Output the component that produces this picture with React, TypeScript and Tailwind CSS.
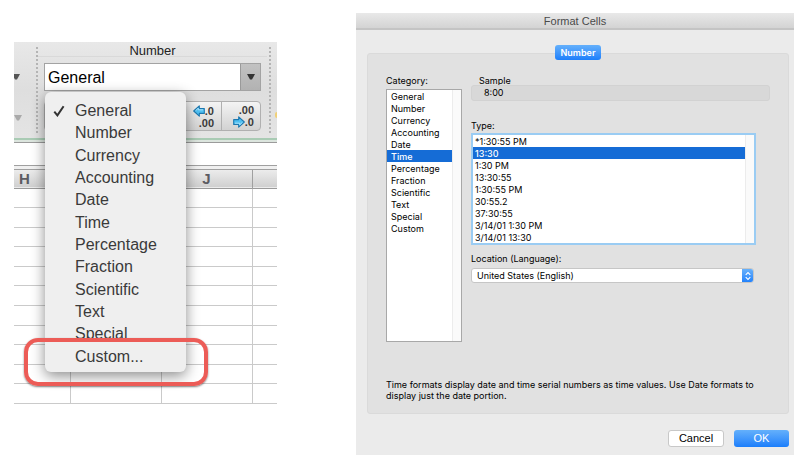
import { useState } from "react";

const menuItems = [
  "General", "Number", "Currency", "Accounting", "Date", "Time",
  "Percentage", "Fraction", "Scientific", "Text", "Special", "Custom...",
];

const categories = [
  "General", "Number", "Currency", "Accounting", "Date", "Time",
  "Percentage", "Fraction", "Scientific", "Text", "Special", "Custom",
];

const timeFormats = [
  "*1:30:55 PM", "13:30", "1:30 PM", "13:30:55", "1:30:55 PM",
  "30:55.2", "37:30:55", "3/14/01 1:30 PM", "3/14/01 13:30",
];

const gridRows = Array.from({ length: 11 }, (_, i) => i);

function Triangle({ className }: { className: string }) {
  return (
    <svg viewBox="0 0 8 6" className={className} aria-hidden="true">
      <path d="M0 0H8L5 5.5H3Z" fill="currentColor" />
    </svg>
  );
}

function BlueArrow({ flip }: { flip?: boolean }) {
  return (
    <svg viewBox="0 0 12 12" className={flip ? "h-3 w-3 rotate-180" : "h-3 w-3"} aria-hidden="true">
      <path
        d="M0.7 6L6.3 0.8V3.6H11.3V8.4H6.3V11.2Z"
        fill="#4fc0f2"
        stroke="#1c78b0"
        strokeWidth="1.1"
        strokeLinejoin="round"
      />
      <path d="M2.6 5.7L5.3 3.1V4.8H10.2" fill="none" stroke="#b5eaff" strokeWidth="0.9" />
    </svg>
  );
}

function DottedLine() {
  return <div className="my-[5px] w-0 border-l-2 border-dotted border-[#b4b4b4]" />;
}

function FormatMenu({ value, onPick }: { value: string; onPick: (v: string) => void }) {
  return (
    <div
      role="menu"
      aria-label="Number format"
      className="absolute top-full left-0 z-10 mt-0.5 flex h-[280px] w-[141px] flex-col rounded-md bg-[#efefef] pt-2 pb-1 shadow-[0_4px_14px_rgba(0,0,0,0.45)]"
    >
      {menuItems.map((item) => (
        <button
          key={item}
          type="button"
          role="menuitemradio"
          aria-checked={item === value}
          onClick={() => onPick(item)}
          className="flex flex-1 items-center pl-2 text-left text-base leading-none text-[#3a3a3a]"
        >
          <span className="w-[22px]">
            {item === value && (
              <svg viewBox="0 0 12 12" className="h-3 w-3" aria-hidden="true">
                <path d="M1.3 6.6L4.4 10.4L10.6 1.2" fill="none" stroke="#333" strokeWidth="2" />
              </svg>
            )}
          </span>
          {item}
        </button>
      ))}
    </div>
  );
}

function Spreadsheet() {
  const [format, setFormat] = useState("General");
  return (
    <section className="relative mt-[42px] overflow-hidden bg-white">
      <div className="flex h-24 bg-linear-to-b from-[#e8e8e8] via-[#dedede] to-[#e4e4e4]">
        <div className="flex w-[22px] flex-col gap-[35px] pt-8">
          <Triangle className="-ml-0.5 h-1.5 w-2 text-[#555]" />
          <Triangle className="h-1.5 w-2 text-[#aaa]" />
        </div>
        <DottedLine />
        <div className="flex flex-1 flex-col pr-2 pl-1.5">
          <div className="-mx-1.5 h-[15px] border-b border-[#d9d9d9] text-center text-[13px] leading-[17px] text-[#222]">
            Number
          </div>
          <div className="relative mt-1.5 flex h-7 border border-[#a3a3a3] bg-white">
            <input
              aria-label="Number format"
              value={format}
              onChange={(e) => setFormat(e.target.value)}
              className="w-0 flex-1 bg-transparent pt-px pl-[3px] text-base text-black outline-none"
            />
            <button
              type="button"
              aria-label="Show formats"
              className="flex w-5 items-center justify-center border-l border-[#9a9a9a] bg-linear-to-b from-[#c2c2c2] to-[#b2b2b2] text-[#333]"
            >
              <Triangle className="h-1.5 w-2" />
            </button>
            <FormatMenu value={format} onPick={setFormat} />
          </div>
          <div className="mt-2.5 flex h-[30px] justify-end rounded-sm border border-[#b0b0b0] bg-linear-to-b from-[#f4f4f4] to-[#d2d2d2] text-[11px] leading-3 font-bold text-[#3a3a3a]">
            <button type="button" aria-label="Increase decimal" className="flex w-[39px] flex-col items-end justify-end pr-[7px] pb-px">
              <span className="flex items-center"><BlueArrow />.0</span>
              <span>.00</span>
            </button>
            <button type="button" aria-label="Decrease decimal" className="flex w-[39px] flex-col items-end justify-start border-l border-[#b0b0b0] pt-0.5 pr-1.5">
              <span>.00</span>
              <span className="flex items-center"><BlueArrow flip />.0</span>
            </button>
          </div>
        </div>
        <DottedLine />
        <div className="flex w-[6px] items-end justify-end pb-5">
          <div className="h-1.5 w-0.5 rounded-l-sm bg-[#f0d078]" />
        </div>
      </div>
      <div className="h-[5px] border-t-2 border-b border-t-[#a9cbb4] border-b-[#9b9b9b] bg-[#dce5de]" />
      <div className="h-[22px]" />
      <div className="h-[5px] border-y border-[#a0a0a0] bg-[#f0f0f0]" />
      <table className="h-[234px] w-full table-fixed border-collapse">
        <colgroup>
          <col className="w-[56px]" />
          <col className="w-[91px]" />
          <col className="w-[91px]" />
          <col />
        </colgroup>
        <thead>
          <tr className="h-[18px] border-b border-[#9a9a9a] bg-linear-to-b from-[#ececec] to-[#d0d0d0] text-[15px] leading-[17px] text-[#5c5c62]">
            <th className="border-r border-[#a0a0a0] p-0 pl-[5px] text-left font-bold">H</th>
            <th className="border-r border-[#a0a0a0] p-0" />
            <th className="border-r border-[#a0a0a0] p-0 font-bold">J</th>
            <th className="p-0" />
          </tr>
        </thead>
        <tbody>
          {gridRows.map((row) => (
            <tr key={row} className="border-b border-[#cacaca]">
              <td className="border-r border-[#cacaca] p-0" />
              <td className="border-r border-[#cacaca] p-0" />
              <td className="border-r border-[#cacaca] p-0" />
              <td className="p-0" />
            </tr>
          ))}
        </tbody>
      </table>
      {/* Highlight around the Custom... entry */}
      <div className="absolute top-[296px] left-[10px] z-20 h-12 w-[184px] rounded-[14px] border-4 border-[#ec5c57] shadow-[0_1px_2px_rgba(0,0,0,0.5)]" />
    </section>
  );
}

function ListBox({
  label, items, value, onPick, className, itemClassName,
}: {
  label: string;
  items: string[];
  value: string;
  onPick: (v: string) => void;
  className: string;
  itemClassName: string;
}) {
  return (
    <div className={`flex bg-white ${className}`}>
      <div role="listbox" aria-labelledby={label} className="flex-1">
        {items.map((item) => (
          <button
            key={item}
            type="button"
            role="option"
            aria-selected={item === value}
            onClick={() => onPick(item)}
            className={`block h-3 w-full text-left whitespace-nowrap ${itemClassName} ${
              item === value ? "bg-[#156cd6] font-medium text-white" : "text-black"
            }`}
          >
            {item}
          </button>
        ))}
      </div>
      <div className="w-[9px] border-l border-[#ececec] bg-[#fafafa]" />
    </div>
  );
}

function FormatDialog() {
  const [category, setCategory] = useState("Time");
  const [type, setType] = useState("13:30");
  return (
    <section
      role="dialog"
      aria-labelledby="dialog-title"
      className="mt-[13px] flex flex-col bg-[#ebebeb] pb-2 font-[Inter,'Liberation_Sans',sans-serif] text-[9px] leading-[13px] text-black"
    >
      <h1
        id="dialog-title"
        className="h-[17px] border-b-2 border-[#c4c4c4] bg-linear-to-b from-[#e9e9e9] to-[#d3d3d3] text-center font-['Liberation_Sans',Arial,sans-serif] text-[11px] leading-4 text-[#4a4a4a]"
      >
        Format Cells
      </h1>
      <div className="mt-[15px] flex flex-col pr-[5px] pl-[11px]">
        <button
          type="button"
          className="relative z-10 -mb-[7px] h-[15px] self-center rounded-[3px] bg-linear-to-b from-[#64b0fb] to-[#1a7efb] px-1.5 font-semibold text-white"
        >
          Number
        </button>
        <div className="rounded-[3px] border border-[#dadada] bg-[#e1e1e1] pt-5 pr-[18px] pb-3 pl-[18px]">
          <div className="flex gap-[9px]">
            <div className="flex w-[76px] flex-col gap-0.5">
              <span id="category-label">Category:</span>
              <ListBox
                label="category-label"
                items={categories}
                value={category}
                onPick={setCategory}
                className="h-[253px] border border-[#a8a8a8]"
                itemClassName="pl-1"
              />
            </div>
            <div className="flex flex-1 flex-col">
              <span className="h-[11px] pl-2">Sample</span>
              <div className="h-4 rounded-[3px] border border-[#d2d2d2] bg-[#d8d8d8] pl-3">8:00</div>
              <span id="type-label" className="mt-[18px]">Type:</span>
              <ListBox
                label="type-label"
                items={timeFormats}
                value={type}
                onPick={setType}
                className="mt-px mr-3.5 border-2 border-[#9accf3]"
                itemClassName="pl-0.5"
              />
              <label htmlFor="location" className="mt-[7px]">Location (Language):</label>
              <div className="relative mt-[3px] mr-4 flex h-[15px] overflow-hidden rounded-[3px] border border-[#c6c6c6] bg-white">
                <select id="location" className="h-full flex-1 appearance-none bg-transparent pl-[5px] leading-[13px] outline-none">
                  <option>United States (English)</option>
                </select>
                <div className="pointer-events-none absolute -inset-y-px -right-px flex w-3 items-center justify-center bg-linear-to-b from-[#6cb4fb] to-[#1a7efb]">
                  <svg viewBox="0 0 8 10" className="h-2.5 w-2" aria-hidden="true">
                    <path d="M1.7 3.8L4 1.5L6.3 3.8M1.7 6.2L4 8.5L6.3 6.2" fill="none" stroke="#fff" strokeWidth="1.1" />
                  </svg>
                </div>
              </div>
            </div>
          </div>
          <p className="mt-[37px] leading-[11px]">
            Time formats display date and time serial numbers as time values. Use Date formats to
            display just the date portion.
          </p>
        </div>
        <div className="mt-4 flex h-[17px] justify-end gap-2.5 font-['Liberation_Sans',Arial,sans-serif] text-[11px] leading-[15px]">
          <button type="button" className="w-14 rounded-[3px] border border-[#c8c8c8] bg-white">Cancel</button>
          <button type="button" className="w-[55px] rounded-[3px] bg-linear-to-b from-[#64b0fb] to-[#1a7efb] text-white">OK</button>
        </div>
      </div>
    </section>
  );
}

export default function App() {
  return (
    <main className="grid min-h-screen grid-cols-[263fr_438fr] items-start gap-[79px] bg-white pr-1.5 pl-3.5 font-['Liberation_Sans',Arial,sans-serif]">
      <Spreadsheet />
      <FormatDialog />
    </main>
  );
}
